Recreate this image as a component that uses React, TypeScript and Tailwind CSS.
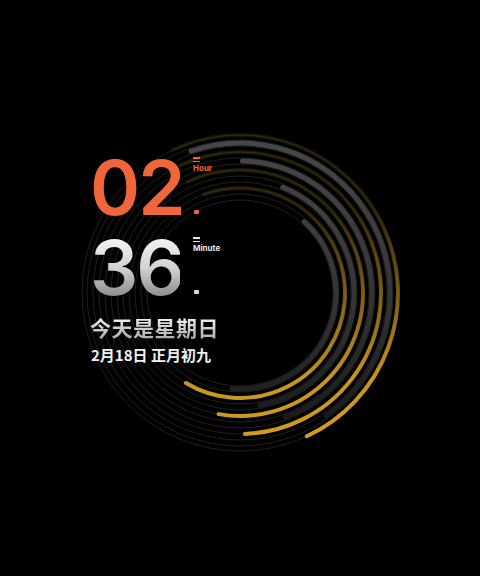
import React from "react";

const CX = 240;
const CY = 293;

const polar = (r: number, deg: number) => {
    const a = (deg * Math.PI) / 180;
    return [CX + r * Math.cos(a), CY + r * Math.sin(a)];
};

const arc = (r: number, from: number, to: number) => {
    const [x1, y1] = polar(r, from);
    const [x2, y2] = polar(r, to);
    const large = to - from > 180 ? 1 : 0;
    return `M ${x1} ${y1} A ${r} ${r} 0 ${large} 1 ${x2} ${y2}`;
};

// thick gray tracks: radius, start angle, end angle
const grayArcs = [
    { r: 96, from: -48, to: 95 },
    { r: 114, from: -68, to: 80 },
    { r: 132, from: -89, to: 70 },
    { r: 150, from: -109, to: 55 },
];

// gold tracks end on the lower left with a round cap
const goldArcs = [
    { r: 105, from: -110, to: 121 },
    { r: 123, from: -115, to: 100 },
    { r: 141, from: -115, to: 88 },
    { r: 158, from: -115, to: 65 },
];

const thinRings = [93, 99, 105, 111, 117, 123, 129, 135, 141, 147, 153, 158];

const Rings = () => (
    <svg className="absolute inset-0" width="480" height="576" viewBox="0 0 480 576">
        <defs>
            <linearGradient id="gold" gradientUnits="userSpaceOnUse" x1="0" y1="135" x2="0" y2="440">
                <stop offset="0" stopColor="#c9961c" stopOpacity="0.12" />
                <stop offset="0.25" stopColor="#c9961c" stopOpacity="0.18" />
                <stop offset="0.5" stopColor="#c9961c" stopOpacity="0.55" />
                <stop offset="0.8" stopColor="#d19d1e" stopOpacity="0.95" />
                <stop offset="1" stopColor="#d19d1e" stopOpacity="1" />
            </linearGradient>
            <linearGradient id="gray" gradientUnits="userSpaceOnUse" x1="0" y1="140" x2="0" y2="420">
                <stop offset="0" stopColor="#474747" />
                <stop offset="0.6" stopColor="#333333" />
                <stop offset="1" stopColor="#1a1a1a" />
            </linearGradient>
        </defs>
        {thinRings.map((r) => (
            <circle key={r} cx={CX} cy={CY} r={r} fill="none" stroke="#1f1f1f" strokeWidth="1" />
        ))}
        {grayArcs.map((a) => (
            <path
                key={a.r}
                d={arc(a.r, a.from, a.to)}
                fill="none"
                stroke="url(#gray)"
                strokeWidth="5"
                strokeLinecap="round"
            />
        ))}
        {goldArcs.map((a) => (
            <path
                key={a.r}
                d={arc(a.r, a.from, a.to)}
                fill="none"
                stroke="url(#gold)"
                strokeWidth="4"
                strokeLinecap="round"
            />
        ))}
    </svg>
);

const SideMark = ({ label, orange }: { label: string; orange: boolean }) => (
    <div className="flex h-[78px] flex-col justify-between pt-[9px] pb-[12px]">
        <div className="flex flex-col gap-[2px]">
            <div className="flex w-[7px] flex-col gap-[2px]">
                <div className={`h-[1.5px] w-[7px] ${orange ? "bg-[#f0653a]" : "bg-[#e6e6e6]"}`} />
                <div className={`h-[1.5px] w-[7px] ${orange ? "bg-[#f0653a]" : "bg-[#e6e6e6]"}`} />
            </div>
            <span className={`text-[8px] font-bold leading-none ${orange ? "text-[#f0653a]" : "text-[#e6e6e6]"}`}>
                {label}
            </span>
        </div>
        <div className={`ml-[1px] h-[4px] w-[5px] rounded-[1px] ${orange ? "bg-[#f0653a]" : "bg-[#d8d8d8]"}`} />
    </div>
);

export default function App() {
    return (
        <div className="relative h-[576px] w-[480px] overflow-hidden bg-black font-['Inter',sans-serif]">
            <Rings />
            <div className="relative flex flex-col pl-[90px] pt-[148px]">
                <div className="flex h-[78px] gap-[13px]">
                    <span className="w-[90px] text-[76px] font-semibold leading-[78px] tracking-[-2px] text-[#f0653a]">
                        02
                    </span>
                    <SideMark label="Hour" orange />
                </div>
                <div className="mt-[2px] flex h-[78px] gap-[13px]">
                    <span className="w-[90px] bg-gradient-to-b from-white via-[#d4d4d4] to-[#777777] bg-clip-text text-[76px] font-semibold leading-[78px] tracking-[-2px] text-transparent">
                        36
                    </span>
                    <SideMark label="Minute" orange={false} />
                </div>
                <span className="mt-[8px] w-fit bg-gradient-to-b from-white to-[#a8a8a8] bg-clip-text font-['Noto_Sans_CJK_SC',sans-serif] text-[21px] font-bold leading-[26px] tracking-[0.5px] text-transparent">
                    今天是星期日
                </span>
                <span className="mt-[5px] pl-[1px] font-['Noto_Sans_CJK_SC',sans-serif] text-[15px] font-bold leading-[20px] text-[#f2f2f2]">
                    2月18日 正月初九
                </span>
            </div>
        </div>
    );
}
